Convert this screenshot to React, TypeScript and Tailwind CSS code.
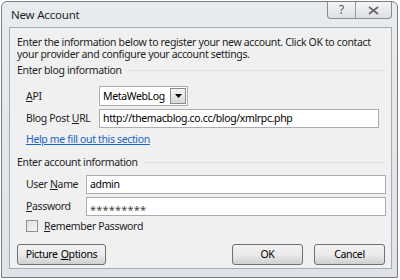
import React from "react";

const font = { fontFamily: '"Noto Sans", "Open Sans", sans-serif' };

function Section({ title, className }: { title: string; className?: string }) {
  return (
    <div className={`flex items-center gap-[6px] h-[14px] ${className ?? ""}`}>
      <span className="whitespace-nowrap">{title}</span>
      <div className="flex-1 h-px bg-[#d5dfe5] mr-[6px]" />
    </div>
  );
}

function TextBox({ value, className }: { value: React.ReactNode; className?: string }) {
  return (
    <div
      className={`h-[19px] border border-[#abadb3] bg-white px-[3px] flex items-center text-black ${className ?? ""}`}
    >
      {value}
    </div>
  );
}

function Button({ children, className }: { children: React.ReactNode; className?: string }) {
  return (
    <div
      className={`h-[21px] rounded-[3px] border border-[#707070] bg-gradient-to-b from-[#f2f2f2] via-[#ebebeb] to-[#cfcfcf] flex items-center justify-center text-black ${className ?? ""}`}
    >
      {children}
    </div>
  );
}

export default function App() {
  return (
    <div className="w-[400px] h-[280px] bg-white overflow-hidden" style={font}>
      <div className="ml-px mt-px w-[397px] h-[277px] rounded-t-[6px] border border-[#7c7c7c] bg-gradient-to-b from-[#e9ecef] to-[#dfe2e6] flex flex-col">
        {/* title bar */}
        <div className="h-[25px] flex items-start justify-between">
          <div className="pl-[9px] pt-[6px] text-[11.5px] leading-[14px] tracking-[-0.2px] text-[#1e1e1e]">New Account</div>
          <div className="flex mr-[5px] h-[17px] border border-t-0 border-[#8c8c8c] rounded-b-[4px] bg-gradient-to-b from-[#f4f5f6] to-[#dde0e4]">
            <div className="w-[28px] border-r border-[#9a9a9a] flex items-center justify-center text-[12px] text-[#555] leading-none">?</div>
            <div className="w-[35px] flex items-center justify-center">
              <svg width="11" height="9" viewBox="0 0 11 9">
                <path d="M1 1 L10 8 M10 1 L1 8" stroke="#6a6a6a" strokeWidth="1.8" fill="none" />
              </svg>
            </div>
          </div>
        </div>

        {/* content */}
        <div className="ml-[7px] mr-[5px] h-[242px] border border-[#a7acb2] bg-[#f0f0f0] pl-[7px] text-[10.5px] tracking-[-0.35px] text-[#1e1e1e] leading-[13px]">
          <p className="mt-[8px] leading-[12px]">
            Enter the information below to register your new account. Click OK to contact your provider and configure
            your account settings.
          </p>
          <Section title="Enter blog information" className="mt-[3px]" />

          <div className="mt-[9px] flex items-center h-[20px]">
            <span className="w-[82px] pl-[9px]">
              <u>A</u>PI
            </span>
            <div className="flex h-[20px] border border-[#abadb3] bg-white">
              <span className="px-[3px] flex items-center w-[70px] text-black">MetaWebLog</span>
              <span className="w-[16px] my-px mr-px border border-[#8b8b8b] bg-gradient-to-b from-[#f4f4f4] to-[#d8d8d8] flex items-center justify-center">
                <svg width="7" height="4" viewBox="0 0 7 4">
                  <path d="M0 0 H7 L3.5 4 Z" fill="#000" />
                </svg>
              </span>
            </div>
          </div>

          <div className="mt-[3px] flex items-center">
            <span className="w-[82px] pl-[9px] whitespace-nowrap">
              Blog Post <u>U</u>RL
            </span>
            <TextBox value="http://themacblog.co.cc/blog/xmlrpc.php" className="w-[280px]" />
          </div>

          <div className="mt-[5px] pl-[9px] h-[14px]">
            <span className="text-[#1664c8] underline">Help me fill out this section</span>
          </div>

          <Section title="Enter account information" className="mt-[8px]" />

          <div className="mt-[6px] flex items-center">
            <span className="w-[69px] pl-[9px] whitespace-nowrap">
              User <u>N</u>ame
            </span>
            <TextBox value="admin" className="w-[300px]" />
          </div>
          <div className="mt-[3px] flex items-center">
            <span className="w-[69px] pl-[9px]">
              <u>P</u>assword
            </span>
            <TextBox
              value={<span className="text-[11px] tracking-[0.2px] text-[#444] translate-y-[3px]">*********</span>}
              className="w-[300px]"
            />
          </div>

          <div className="mt-[3px] flex items-center pl-[9px] h-[14px]">
            <span className="w-[12px] h-[12px] border border-[#8f8f8f] bg-gradient-to-br from-[#dedede] to-[#f7f7f7] mr-[6px]" />
            <span>
              <u>R</u>emember Password
            </span>
          </div>

          <div className="mt-[11px] flex items-center">
            <Button className="w-[89px]">
              Picture <u className="ml-[3px]">O</u>ptions
            </Button>
            <div className="flex-1" />
            <Button className="w-[71px]">OK</Button>
            <Button className="w-[71px] ml-[11px] mr-[6px]">Cancel</Button>
          </div>
        </div>
      </div>
    </div>
  );
}
